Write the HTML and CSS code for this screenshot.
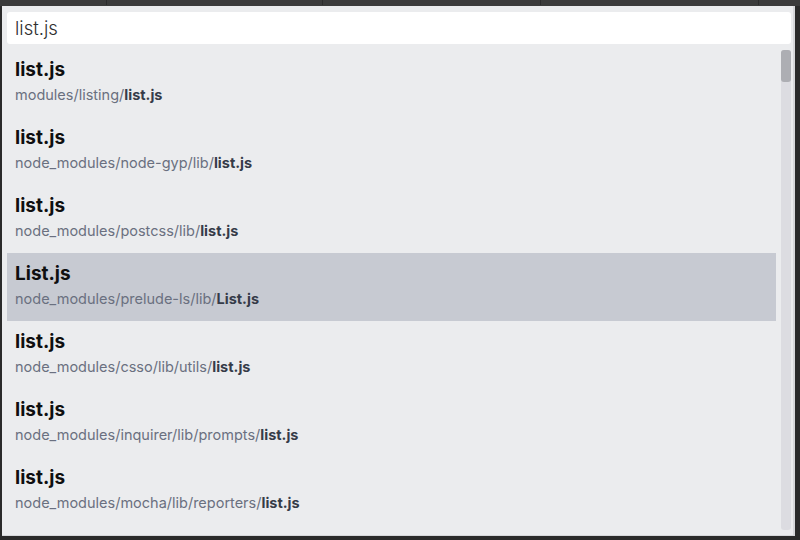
FILE: index.html
```html
<!DOCTYPE html>
<html>
<head>
<meta charset="utf-8">
<link rel="stylesheet" href="styles.css">
</head>
<body>
<div class="topbar"><span class="tick t1"></span><span class="tick t2"></span><span class="tick t3"></span><span class="tick t4"></span></div>
<div class="frame">
  <div class="panel">
    <div class="search">list.js</div>
    <div class="results">
      <ul class="list">
        <li class="row"><div class="title">list.js</div><div class="path">modules/listing/<b>list.js</b></div></li>
        <li class="row"><div class="title">list.js</div><div class="path">node_modules/node-gyp/lib/<b>list.js</b></div></li>
        <li class="row"><div class="title">list.js</div><div class="path">node_modules/postcss/lib/<b>list.js</b></div></li>
        <li class="row selected"><div class="title">List.js</div><div class="path">node_modules/prelude-ls/lib/<b>List.js</b></div></li>
        <li class="row"><div class="title">list.js</div><div class="path">node_modules/csso/lib/utils/<b>list.js</b></div></li>
        <li class="row"><div class="title">list.js</div><div class="path">node_modules/inquirer/lib/prompts/<b>list.js</b></div></li>
        <li class="row"><div class="title">list.js</div><div class="path">node_modules/mocha/lib/reporters/<b>list.js</b></div></li>
      </ul>
      <div class="scrollbar"><div class="thumb"></div></div>
    </div>
  </div>
</div>
</body>
</html>
```

FILE: styles.css
```css
html, body {
  margin: 0;
  padding: 0;
  background: #2a2a2a;
  width: 800px;
  height: 540px;
  overflow: hidden;
  font-family: "Inter", "Liberation Sans", sans-serif;
}
.topbar {
  height: 6px;
  background: #3b3b3b;
  display: flex;
}
.tick {
  width: 1px;
  height: 5px;
  background: #2c2c2c;
}
.t1 { margin-left: 106px; }
.t2 { margin-left: 215px; }
.t3 { margin-left: 217px; }
.t4 { margin-left: 217px; }
.frame {
  display: flex;
  height: 530px;
  padding-left: 2px;
}
.panel {
  width: 793px;
  height: 530px;
  box-sizing: border-box;
  background: #ebecee;
  padding: 6px 2px 0 5px;
  border-right: 2px solid #d6d7da;
  border-bottom: 1px solid #d6d7da;
  display: flex;
  flex-direction: column;
}
.search {
  height: 32px;
  background: #ffffff;
  border-radius: 3px;
  padding-left: 8px;
  font-size: 18.5px;
  font-weight: 300;
  line-height: 32px;
  color: #2f2f2f;
}
.results {
  display: flex;
  gap: 5px;
  margin-top: 5px;
  flex: 1;
  min-height: 0;
}
.list {
  list-style: none;
  margin: 0;
  padding: 0;
  flex: 1;
}
.row {
  height: 68px;
  box-sizing: border-box;
  padding: 10px 0 0 8px;
}
.row.selected {
  background: #c7cad2;
}
.title {
  font-size: 19px;
  font-weight: 700;
  line-height: 22px;
  color: #0f0f10;
}
.path {
  margin-top: 4px;
  font-size: 14.5px;
  line-height: 20px;
  color: #6a7080;
}
.path b {
  color: #353b48;
  font-weight: 700;
}
.scrollbar {
  width: 10px;
  margin-top: 1px;
  margin-bottom: 5px;
  background: #dcdce1;
  border-radius: 3px;
}
.thumb {
  height: 32px;
  background: #adaeb3;
  border-radius: 3px;
}
```
